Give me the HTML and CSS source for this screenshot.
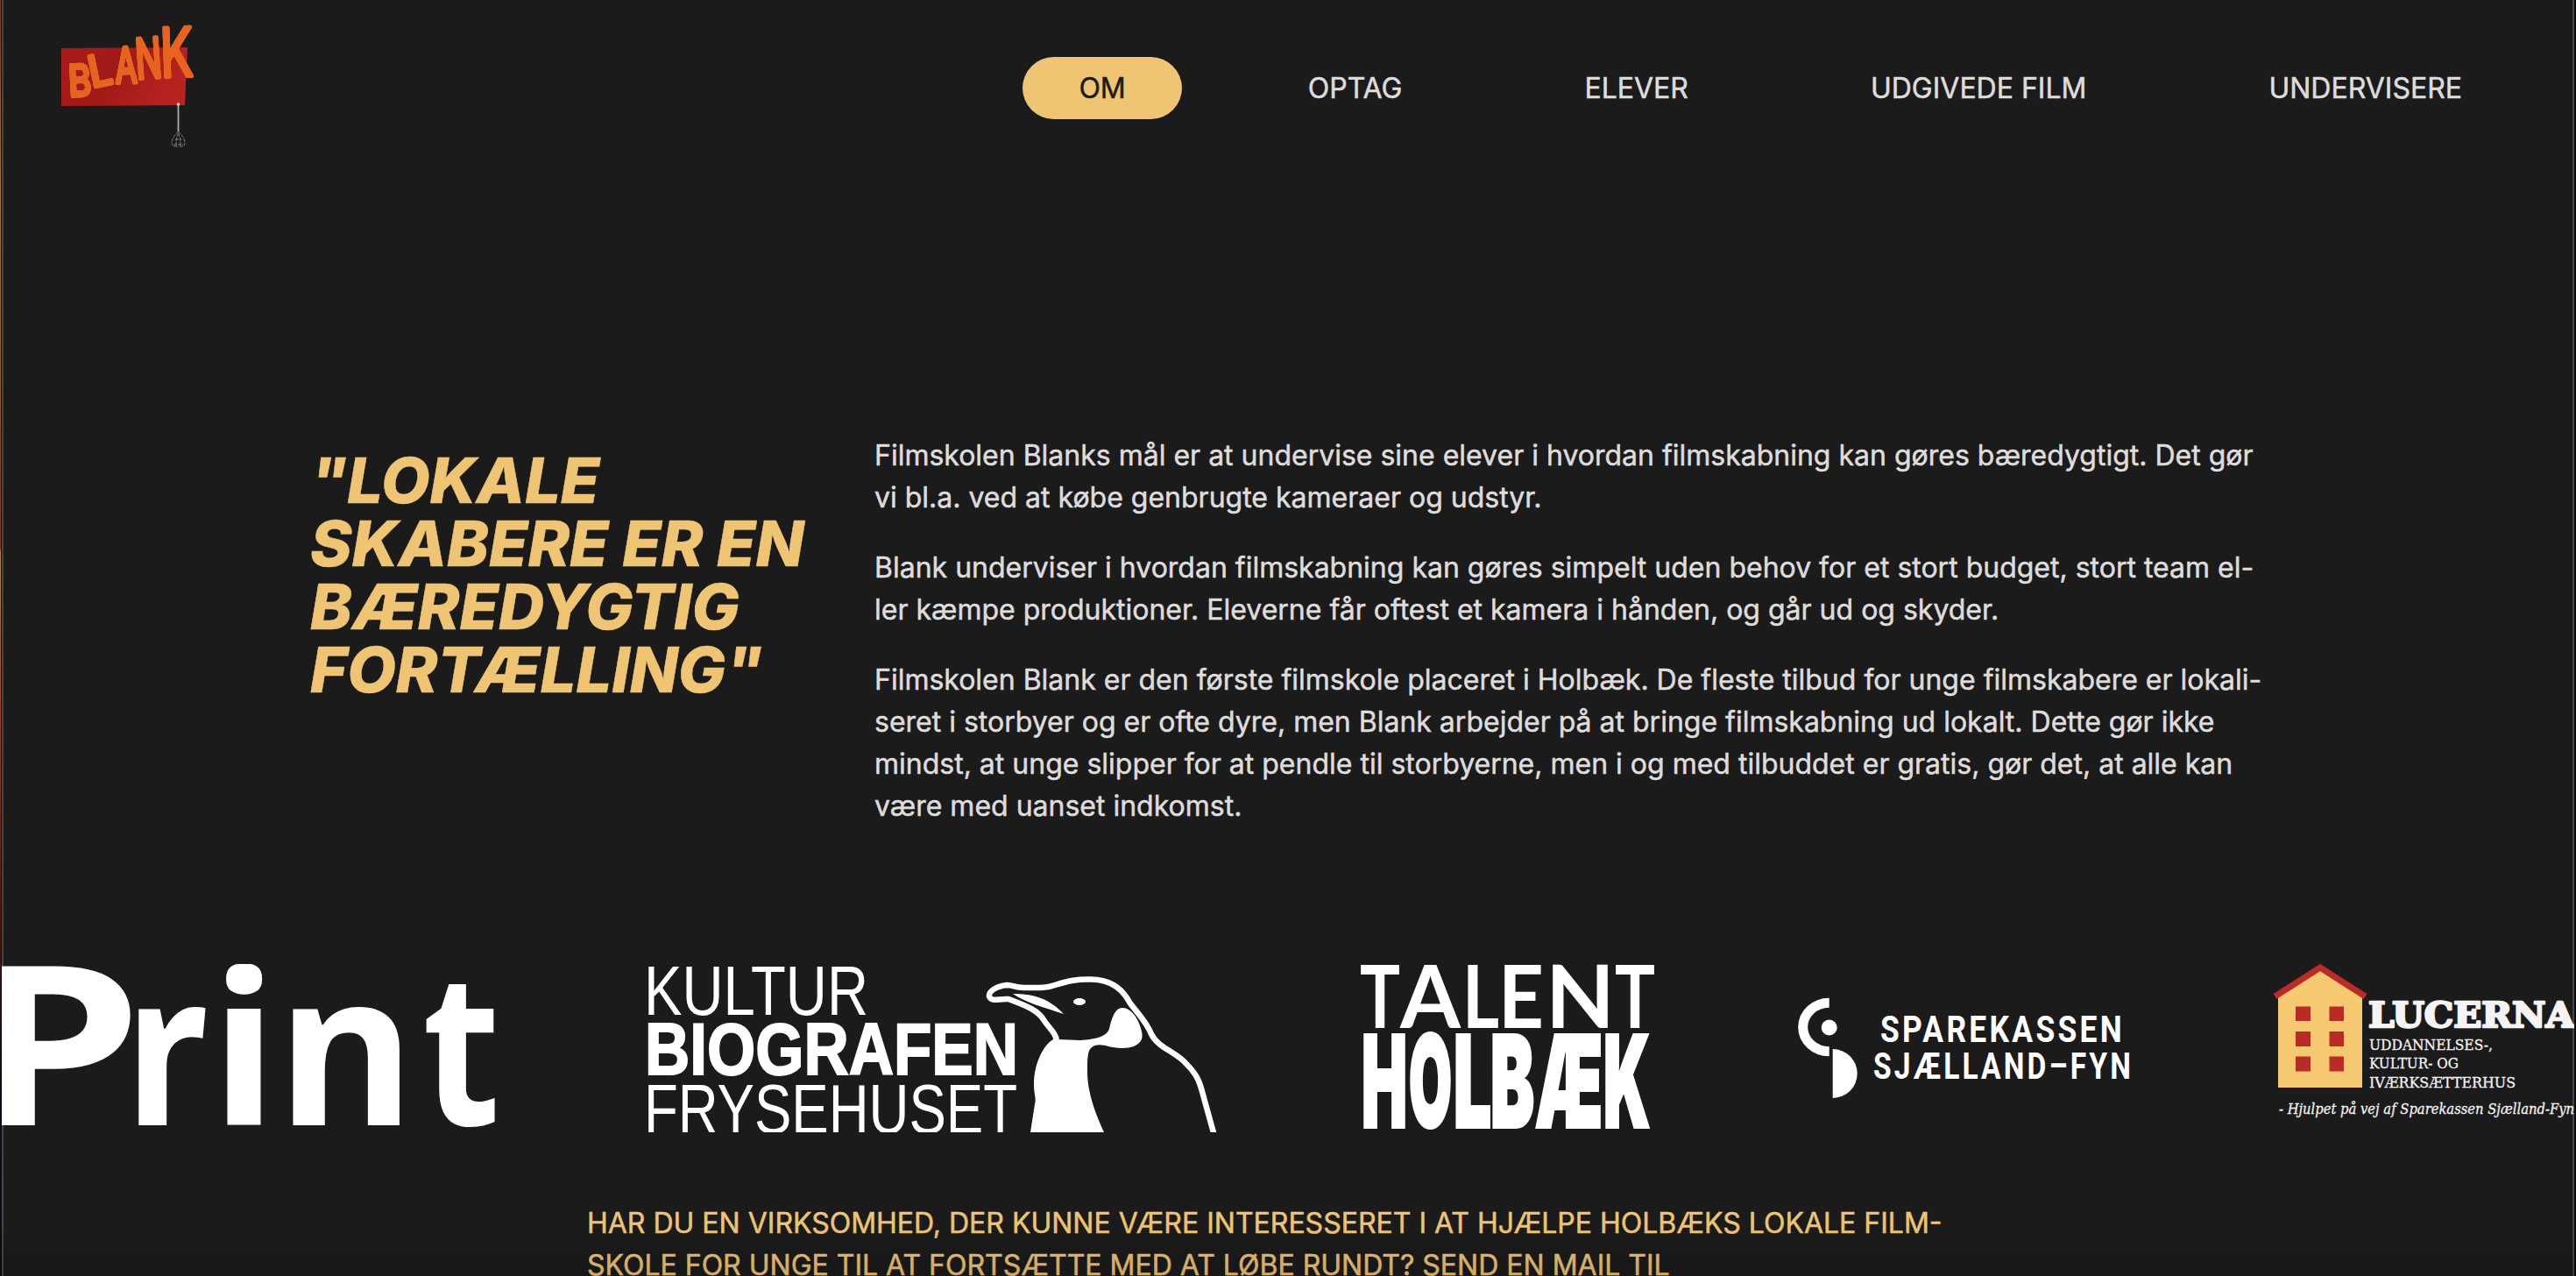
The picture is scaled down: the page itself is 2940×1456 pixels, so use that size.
FILE: index.html
```
<!DOCTYPE html>
<html lang="da">
<head>
<meta charset="utf-8">
<title>Filmskolen Blank</title>
<link rel="stylesheet" href="styles.css">
</head>
<body>
<div class="page">
  <header class="header">
    <svg class="brand" width="160" height="150" viewBox="0 0 160 150" aria-label="Blank">
      <defs>
        <linearGradient id="sign" x1="0" y1="0" x2="1" y2="0.3"><stop offset="0" stop-color="#a91b1b"/><stop offset="0.5" stop-color="#a01a18"/><stop offset="1" stop-color="#b8221f"/></linearGradient>
      </defs>
      <path d="M6 31L150 30L147 96L6 97Z" fill="url(#sign)"/>
      <g class="brand-letters">
        <text transform="translate(15 86) rotate(-3)" font-size="49" textLength="26" lengthAdjust="spacingAndGlyphs">B</text>
        <text transform="translate(41 76) rotate(-12)" font-size="49" textLength="26" lengthAdjust="spacingAndGlyphs">L</text>
        <text transform="translate(68 71) rotate(-2)" font-size="56" textLength="25" lengthAdjust="spacingAndGlyphs">A</text>
        <text transform="translate(92 66) rotate(-4)" font-size="63" textLength="30" lengthAdjust="spacingAndGlyphs">N</text>
        <text transform="translate(120 64) rotate(-2)" font-size="77" textLength="37" lengthAdjust="spacingAndGlyphs">K</text>
      </g>
      <g fill="none" stroke="#b5a9a4">
        <path d="M139.500 95V126" stroke-width="1.800"/>
        <circle cx="139.500" cy="95" r="1.800" fill="#e8cfcf" stroke="none"/>
        <path d="M139.500 126C130 135 130 144 137 143M139.500 126C149 135 149 144 142 143M139.500 128C137 134 136 139 138 144M139.500 128C142 134 143 139 141 144M136 135L143 135M134 141L145 141" stroke-width="0.900" stroke="#8d8d8d" stroke-dasharray="4 1"/>
      </g>
    </svg>
    <nav class="nav">
      <a class="nav-link active">OM</a>
      <a class="nav-link">OPTAG</a>
      <a class="nav-link">ELEVER</a>
      <a class="nav-link">UDGIVEDE FILM</a>
      <a class="nav-link">UNDERVISERE</a>
    </nav>
  </header>

  <main>
    <section class="intro">
      <h1 class="quote">"LOKALE<br>SKABERE ER EN<br>BÆREDYGTIG<br>FORTÆLLING"</h1>
      <div class="copy">
        <p>Filmskolen Blanks mål er at undervise sine elever i hvordan filmskabning kan gøres bæredygtigt. Det gør<br>vi bl.a. ved at købe genbrugte kameraer og udstyr.</p>
        <p>Blank underviser i hvordan filmskabning kan gøres simpelt uden behov for et stort budget, stort team el-<br>ler kæmpe produktioner. Eleverne får oftest et kamera i hånden, og går ud og skyder.</p>
        <p>Filmskolen Blank er den første filmskole placeret i Holbæk. De fleste tilbud for unge filmskabere er lokali-<br>seret i storbyer og er ofte dyre, men Blank arbejder på at bringe filmskabning ud lokalt. Dette gør ikke<br>mindst, at unge slipper for at pendle til storbyerne, men i og med tilbuddet er gratis, gør det, at alle kan<br>være med uanset indkomst.</p>
      </div>
    </section>

    <section class="sponsors">
      <svg class="logo print" width="570" height="192" viewBox="0 0 570 192">
        <text y="184" font-size="242"><tspan x="-38" font-size="254" textLength="198" lengthAdjust="spacingAndGlyphs">P</tspan><tspan x="141" textLength="94" lengthAdjust="spacingAndGlyphs">r</tspan><tspan x="239" textLength="75" lengthAdjust="spacingAndGlyphs">i</tspan><tspan x="315" textLength="156" lengthAdjust="spacingAndGlyphs">n</tspan><tspan x="480" textLength="89" lengthAdjust="spacingAndGlyphs">t</tspan></text>
      </svg>

      <svg class="logo kultur" width="656" height="192" viewBox="0 0 656 192">
        <g fill="#fff">
          <text class="thin" x="-3" y="58" font-size="79" textLength="256" lengthAdjust="spacingAndGlyphs">KULTUR</text>
          <text class="heavy" x="-2" y="126" font-size="83" textLength="426" lengthAdjust="spacingAndGlyphs">BIOGRAFEN</text>
          <text class="thin" x="-3" y="193" font-size="79" textLength="426" lengthAdjust="spacingAndGlyphs">FRYSEHUSET</text>
          <path d="M464 86C452 93 442 115 442 137C442 150 445 152 443 160L438 192H522C508 162 503 140 503 123C503 110 503 100 507 96C512 91 520 92 527 94C536 96 548 97 556 94C564 90 567 86 565 77C562 62 552 49 542 50C534 51 530 64 528 74C525 83 512 86 495 87L468 86Z"/>
          <ellipse cx="494" cy="43" rx="7" ry="4"/>
          <path d="M418 34C440 34 458 38 476 57C455 50 432 44 418 34Z"/>
        </g>
        <path d="M468 88C468 80 460 74 454 65C446 51 428 46 413 40C402 39 394 44 391 37C390 31 400 25 411 24C419 24 420 27 430 27C445 27 456 28 466 24C482 19 492 17 507 17.500C534 18 545 32 552 45C562 58 571 67 576 80C584 96 604 100 616 114C632 130 632 139 638 160L648 196" fill="none" stroke="#fff" stroke-width="6.500" stroke-linejoin="round"/>
      </svg>

      <svg class="logo talent" width="340" height="192" viewBox="0 0 340 192">
        <text class="futura" y="73" font-size="100"><tspan x="0" textLength="46" lengthAdjust="spacingAndGlyphs">T</tspan><tspan x="46" textLength="69" lengthAdjust="spacingAndGlyphs">A</tspan><tspan x="117" textLength="42" lengthAdjust="spacingAndGlyphs">L</tspan><tspan x="158" textLength="52" lengthAdjust="spacingAndGlyphs">E</tspan><tspan x="212" textLength="79" lengthAdjust="spacingAndGlyphs">N</tspan><tspan x="291" textLength="46" lengthAdjust="spacingAndGlyphs">T</tspan></text>
        <text class="holbaek" y="186" font-size="145"><tspan x="2" textLength="52" lengthAdjust="spacingAndGlyphs">H</tspan><tspan x="56" textLength="49" lengthAdjust="spacingAndGlyphs">O</tspan><tspan x="107" textLength="43" lengthAdjust="spacingAndGlyphs">L</tspan><tspan x="149" textLength="50" lengthAdjust="spacingAndGlyphs">B</tspan><tspan x="200" textLength="77" lengthAdjust="spacingAndGlyphs">Æ</tspan><tspan x="278" textLength="53" lengthAdjust="spacingAndGlyphs">K</tspan></text>
      </svg>

      <svg class="logo spare" width="386" height="192" viewBox="0 0 386 192">
        <path d="M37.700 44.200A30 27.800 0 0 0 37.700 99.800" fill="none" stroke="#fff" stroke-width="11"/>
        <circle cx="37.700" cy="72.500" r="9" fill="#fff"/>
        <path d="M41.700 97A28 28 0 0 1 41.700 153Z" fill="#fff"/>
        <g fill="#fff" class="mono">
          <text x="96" y="88.500" font-size="43" textLength="279" lengthAdjust="spacingAndGlyphs">SPAREKASSEN</text>
          <text x="88" y="131" font-size="43" textLength="297" lengthAdjust="spacingAndGlyphs">SJÆLLAND–FYN</text>
        </g>
      </svg>

      <svg class="logo lucerna" width="346" height="192" viewBox="0 0 346 192">
        <path d="M8 36L56 6L104 36V141H8Z" fill="#f5c96f"/>
        <path d="M4.500 37L56 4L107.500 37" fill="none" stroke="#bb2a27" stroke-width="7"/>
        <path d="M28 48.500h17v16.500h-17zM66.500 48.500h16.500v16.500h-16.500zM28 77h17v17h-17zM66.500 77h16.500v17h-16.500zM28 105.500h17v17h-17zM66.500 105.500h16.500v17h-16.500z" fill="#b92b25"/>
        <g class="slab">
          <text class="lucerna-name" x="111" y="72" font-size="39" textLength="235" lengthAdjust="spacingAndGlyphs">LUCERNA</text>
          <text x="112" y="98" font-size="17" textLength="141" lengthAdjust="spacingAndGlyphs">UDDANNELSES-,</text>
          <text x="112" y="119" font-size="17" textLength="102" lengthAdjust="spacingAndGlyphs">KULTUR- OG</text>
          <text x="112" y="140.500" font-size="17" textLength="167" lengthAdjust="spacingAndGlyphs">IVÆRKSÆTTERHUS</text>
          <text class="tag" x="9" y="171" font-size="17" textLength="337" lengthAdjust="spacingAndGlyphs">- Hjulpet på vej af Sparekassen Sjælland-Fyn</text>
        </g>
      </svg>
    </section>

    <p class="cta">HAR DU EN VIRKSOMHED, DER KUNNE VÆRE INTERESSERET I AT HJÆLPE HOLBÆKS LOKALE FILM-<br>SKOLE FOR UNGE TIL AT FORTSÆTTE MED AT LØBE RUNDT? SEND EN MAIL TIL</p>
  </main>
</div>
</body>
</html>
```
FILE: styles.css
```
* { box-sizing: border-box; }

html { background: #0c0c0c; }

html, body { margin: 0; height: 1456px; overflow: hidden; }

body {
  position: relative;
  background: linear-gradient(#7a3f14, #b0761f 15%, #a05a14 30%, #8a3a10 43%, #b98a3a 43.200%, #a84a14 55%, #5a1410 72%, #0a0f1e 84%, #050a14) no-repeat 0 0 / 1px 1456px;
  font-family: Inter, "Liberation Sans", sans-serif;
  font-size: 32px;
  line-height: 48px;
  color: #dfdcdc;
}

.page {
  width: 2936px;
  height: 1456px;
  margin-left: 2px;
  overflow: hidden;
  background: #1b1b1b;
  box-shadow: inset 2px 0 #454545, inset -2px 0 #454545;
}

/* soft fade along the bottom edge of the viewport */
.page::after {
  content: "";
  position: absolute;
  left: 2px;
  right: 2px;
  bottom: 0;
  height: 60px;
  background: linear-gradient(transparent, rgba(0, 0, 0, .14));
}

.header {
  display: flex;
  justify-content: space-between;
  align-items: flex-start;
  height: 504px;
  padding: 24px 64px 0 62px;
}

.nav { display: flex; gap: 80px; padding-top: 41px; }

.nav-link { height: 71px; padding: 12px 64px 0; border-radius: 36px; -webkit-text-stroke: .5px currentColor; }
.nav-link.active { background: #efc573; color: #1b1b1b; }

.intro { display: flex; height: 596px; padding-left: 352px; }

.quote {
  width: 644px;
  margin: 8px 0 0;
  color: #efc573;
  font-size: 72px;
  line-height: 72px;
  font-weight: 800;
  font-style: italic;
  white-space: nowrap;
  -webkit-text-stroke: .5px currentColor;
}

.copy { white-space: nowrap; margin-top: -8px; -webkit-text-stroke: .5px currentColor; }
.copy p { margin: 0 0 32px; }

.sponsors { display: flex; height: 192px; }
.logo { flex: none; display: block; overflow: hidden; }
.kultur { margin-left: 166px; }
.talent { margin-left: 158px; }
.spare { margin-left: 158px; }
.lucerna { margin-left: 156px; }

.brand-letters {
  font-family: Inter, sans-serif;
  font-weight: 400;
  fill: #e8641e;
  stroke: #e8641e;
  stroke-width: 4;
  stroke-linejoin: round;
  filter: drop-shadow(0 0 .6px #f0a030);
}

.print { font-family: "Noto Sans", sans-serif; font-weight: 700; fill: #fff; }
.thin { font-family: "Liberation Sans", sans-serif; }
.heavy { font-family: "Liberation Sans", sans-serif; font-weight: 700; stroke: #fff; stroke-width: 2; }
.futura { font-family: Lato, sans-serif; font-weight: 700; fill: #fff; }
.holbaek { font-family: Inter, sans-serif; font-weight: 900; fill: #fff; stroke: #fff; stroke-width: 4; }
.mono { font-family: Roboto, sans-serif; font-weight: 700; letter-spacing: 4px; }
.slab { font-family: "DejaVu Serif", serif; fill: #f5f3f3; stroke: #f5f3f3; stroke-width: .3; }
.lucerna-name { font-weight: 700; stroke-width: 2.500; stroke-linejoin: round; }
.tag { font-style: italic; }

.cta { margin: 80px 0 0 668px; color: #efc573; white-space: nowrap; -webkit-text-stroke: .5px currentColor; }
```
